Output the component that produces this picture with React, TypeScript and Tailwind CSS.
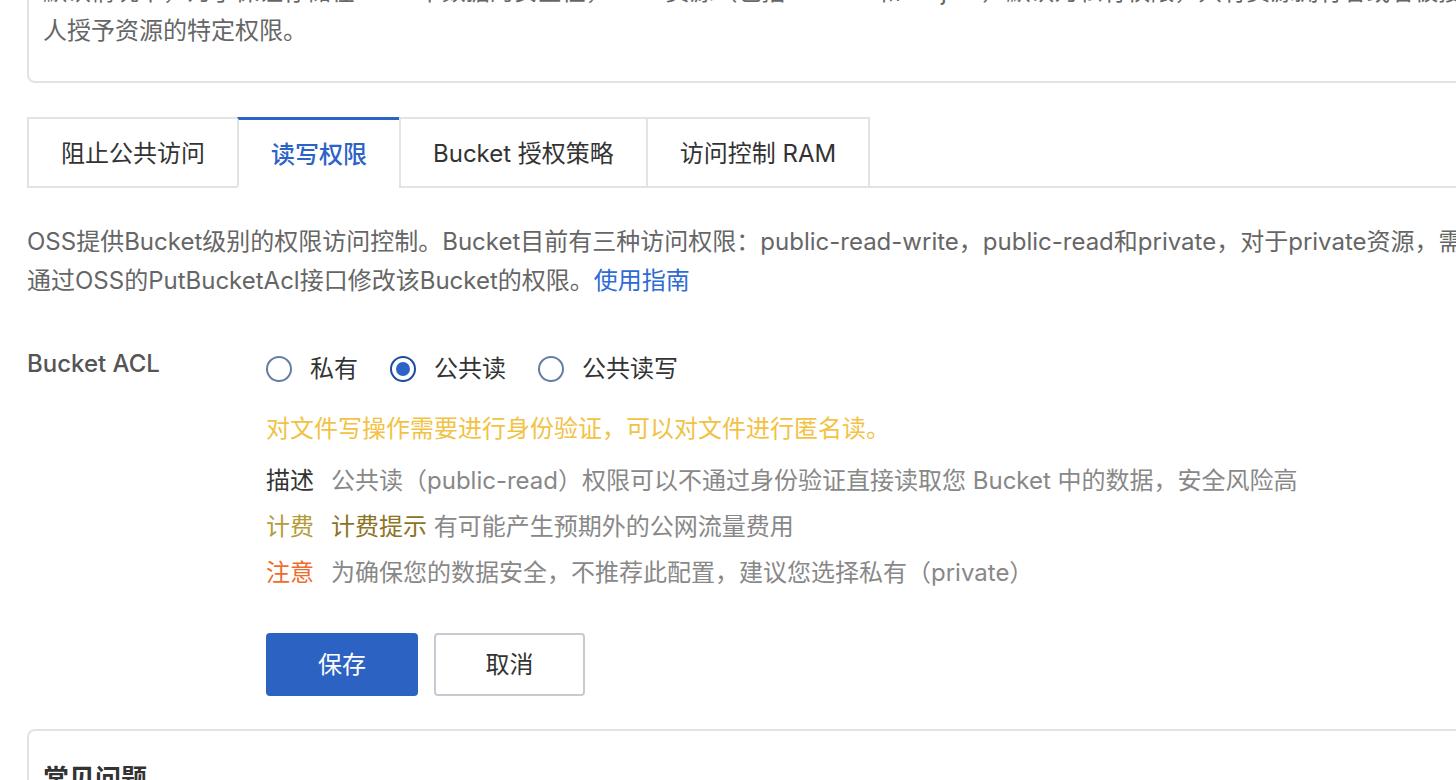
import { useState } from "react"

const tabs = ["阻止公共访问", "读写权限", "Bucket 授权策略", "访问控制 RAM"]

const aclOptions = [
  { value: "private", label: "私有" },
  { value: "public-read", label: "公共读" },
  { value: "public-read-write", label: "公共读写" },
]

function Radio({ checked }: { checked: boolean }) {
  return checked ? (
    <span className="flex h-[26px] w-[26px] items-center justify-center rounded-full border-2 border-[#1f4c9c]">
      <span className="h-[14px] w-[14px] rounded-full bg-[#2b63c6]" />
    </span>
  ) : (
    <span className="h-[26px] w-[26px] rounded-full border-2 border-[#647ea4]" />
  )
}

export default function App() {
  const [activeTab, setActiveTab] = useState(1)
  const [acl, setAcl] = useState("public-read")

  return (
    <div
      className="w-full h-[780px] overflow-hidden bg-white text-[24px] text-[#333]"
      style={{ fontFamily: 'Inter, "Noto Sans CJK SC", sans-serif' }}>
      <div className="w-[1700px] pl-[27px]">
        {/* Intro card (scrolled partly out of view) */}
        <div className="-mt-[50px] rounded-lg border-2 border-[#e3e3e3] pl-[14px] pt-[20px] pb-[31px] leading-[39px] text-[#666]">
          <div className="whitespace-nowrap">
            默认情况下，为了保证存储在 OSS 中数据的安全性，OSS 资源（包括 Bucket 和 Object）默认为私有权限，只有资源拥有者或者被授权的用户允许访问。如需授权他人访问您的资源，可以向他
          </div>
          <div className="whitespace-nowrap">人授予资源的特定权限。</div>
        </div>

        {/* Tabs */}
        <div className="mt-[34px] flex border-b-2 border-[#e3e3e3]">
          {tabs.map((tab, i) => (
            <button
              key={tab}
              onClick={() => setActiveTab(i)}
              className={`-mb-[2px] h-[71px] border-l-2 px-[32px] whitespace-nowrap ${
                i === tabs.length - 1 ? "border-r-2" : ""
              } ${
                activeTab === i
                  ? "border-t-[3px] border-t-[#2b63c6] border-x-[#e3e3e3] border-b-2 border-b-white bg-white pt-[3px] font-medium text-[#2b63c6]"
                  : "border-t-2 border-[#e3e3e3] border-b-2 border-b-[#e3e3e3] pt-[3px] text-[#333]"
              }`}>
              {tab}
            </button>
          ))}
        </div>

        {/* Description */}
        <div className="mt-[34px] leading-[39px] text-[#666]">
          <div className="whitespace-nowrap">
            OSS提供Bucket级别的权限访问控制。Bucket目前有三种访问权限：public-read-write，public-read和private，对于private资源，需要通过身份验证后才能访问。
          </div>
          <div className="whitespace-nowrap">
            通过OSS的PutBucketAcl接口修改该Bucket的权限。
            <a className="text-[#2f6bd6]" href="#">
              使用指南
            </a>
          </div>
        </div>

        {/* Form */}
        <div className="mt-[49px] flex">
          <div className="w-[239px] shrink-0 leading-[29px] font-medium text-[#555]">Bucket ACL</div>
          <div className="flex flex-col">
            <div className="flex h-[39px] items-center">
              {aclOptions.map(opt => (
                <label
                  key={opt.value}
                  onClick={() => setAcl(opt.value)}
                  className="mr-[32px] flex cursor-pointer items-center gap-[18px] text-[#333]">
                  <Radio checked={acl === opt.value} />
                  <span>{opt.label}</span>
                </label>
              ))}
            </div>

            <div className="mt-[21px] leading-[39px] text-[#f2c244]">
              对文件写操作需要进行身份验证，可以对文件进行匿名读。
            </div>

            <div className="mt-[10px] leading-[46px]">
              <div className="flex gap-[17px]">
                <span className="text-[#333]">描述</span>
                <span className="text-[#888]">
                  公共读（public-read）权限可以不通过身份验证直接读取您 Bucket 中的数据，安全风险高
                </span>
              </div>
              <div className="flex gap-[17px]">
                <span className="text-[#b49c3a]">计费</span>
                <span className="text-[#888]">
                  <span className="text-[#8b7424]">计费提示</span> 有可能产生预期外的公网流量费用
                </span>
              </div>
              <div className="flex gap-[17px]">
                <span className="text-[#f06c2c]">注意</span>
                <span className="text-[#888]">为确保您的数据安全，不推荐此配置，建议您选择私有（private）</span>
              </div>
            </div>

            <div className="mt-[37px] flex gap-[16px]">
              <button className="h-[63px] w-[152px] rounded-[4px] bg-[#2c63c2] text-white">保存</button>
              <button className="h-[63px] w-[151px] rounded-[4px] border-2 border-[#c6cad1] bg-white text-[#333]">
                取消
              </button>
            </div>
          </div>
        </div>

        {/* FAQ card */}
        <div className="mt-[33px] rounded-t-lg border-2 border-[#e3e3e3] pl-[14px] pt-[28px] pb-[40px]">
          <div className="text-[26px] font-semibold text-[#333]">常见问题</div>
        </div>
      </div>
    </div>
  )
}
